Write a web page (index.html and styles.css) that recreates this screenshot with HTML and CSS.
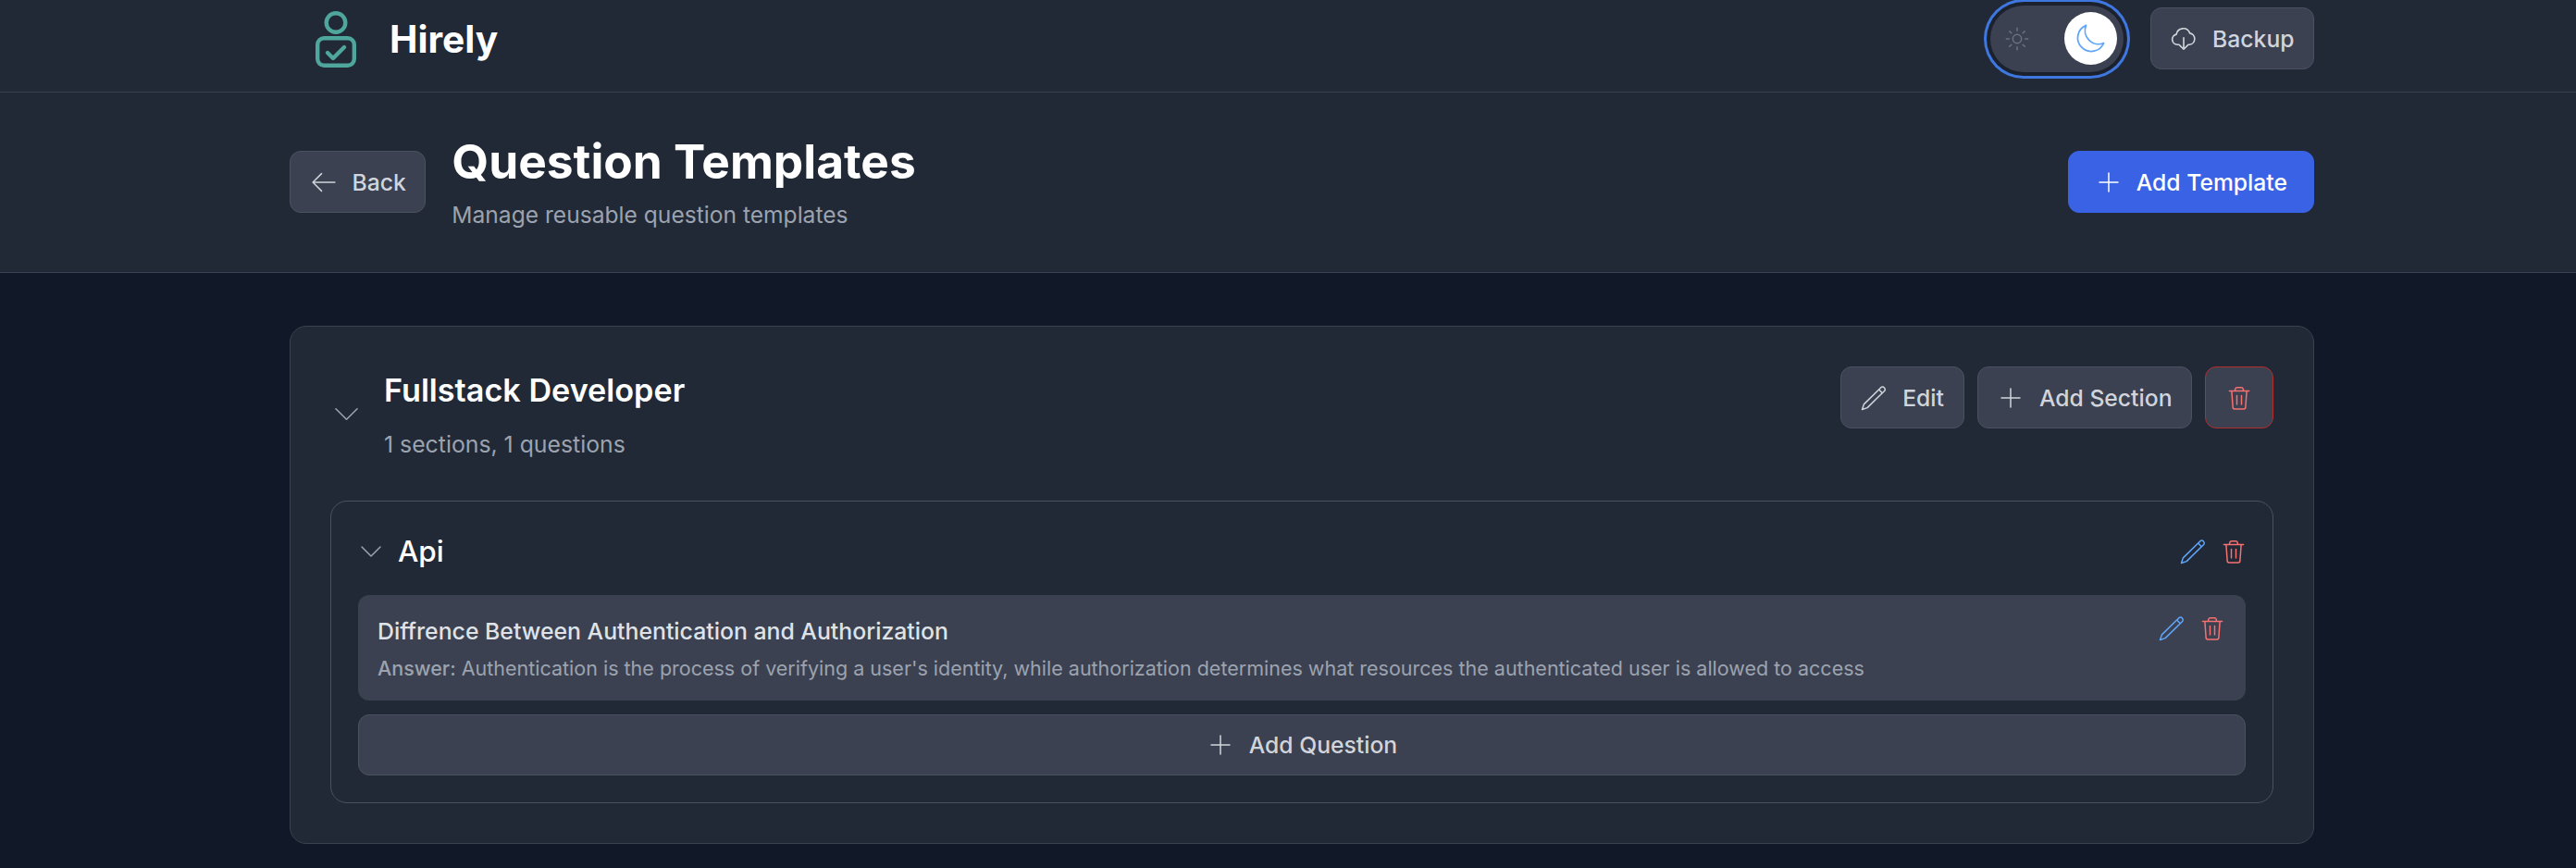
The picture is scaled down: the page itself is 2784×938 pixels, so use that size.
FILE: index.html
```html
<!DOCTYPE html>
<html lang="en">
<head>
<meta charset="utf-8">
<title>Hirely</title>
<link rel="stylesheet" href="styles.css">
</head>
<body>
<header class="topbar">
  <div class="wrap topbar-in">
    <div class="brand">
      <svg class="logo" viewBox="0 0 44 61" fill="none" stroke="#4fa69c" stroke-width="4.400" stroke-linecap="round" stroke-linejoin="round"><circle cx="22" cy="12.500" r="10.300"/><rect x="2.200" y="29.200" width="39.600" height="29.600" rx="7"/><path d="M13 45l6 6 12-12"/></svg>
      <span class="brand-name">Hirely</span>
    </div>
    <div class="top-actions">
      <div class="toggle">
        <svg class="sun" viewBox="0 0 24 24" fill="none" stroke="#6b7280" stroke-width="1.300" stroke-linecap="round"><circle cx="12" cy="12" r="4"/><path d="M12 2v2.500M12 19.500V22M2 12h2.500M19.500 12H22M4.900 4.900l1.800 1.800M17.300 17.300l1.800 1.800M4.900 19.100l1.800-1.800M17.300 6.700l1.800-1.800"/></svg>
        <span class="knob"><svg class="moon" viewBox="0 0 24 24" fill="none" stroke="#60a5fa" stroke-width="1.200" stroke-linejoin="round"><path d="M21.750 15a9.750 9.750 0 0 1-12.750-12.750A9.750 9.750 0 1 0 21.750 15z"/></svg></span>
      </div>
      <button class="btn"><svg class="ic" viewBox="0 0 24 24" fill="none" stroke="currentColor" stroke-width="1.300" stroke-linecap="round" stroke-linejoin="round"><path d="M8 17H6.500a4.500 4.500 0 0 1-.8-8.900 6 6 0 0 1 11.600-1A5 5 0 0 1 17 17h-1"/><path d="M12 11v10M8.500 17.500L12 21l3.500-3.500"/></svg>Backup</button>
    </div>
  </div>
</header>
<section class="subbar">
  <div class="wrap subbar-in">
    <div class="sub-left">
      <button class="btn"><svg class="ic" viewBox="0 0 24 24" fill="none" stroke="currentColor" stroke-width="1.200" stroke-linecap="round" stroke-linejoin="round"><path d="M10 4.500L2.500 12l7.500 7.500M2.500 12h19"/></svg>Back</button>
      <div class="sub-text">
        <h1 class="title">Question Templates</h1>
        <p class="subtitle">Manage reusable question templates</p>
      </div>
    </div>
    <button class="btn btn-primary"><svg class="ic" viewBox="0 0 24 24" fill="none" stroke="currentColor" stroke-width="1.200" stroke-linecap="round"><path d="M12 4v16M4 12h16"/></svg>Add Template</button>
  </div>
</section>
<main class="wrap content">
  <article class="card">
    <div class="card-head">
      <div class="card-left">
        <svg class="chev" viewBox="0 0 24 24" fill="none" stroke="#9ca3af" stroke-width="1" stroke-linecap="round" stroke-linejoin="round"><path d="M19.500 8.250L12 15.750 4.500 8.250"/></svg>
        <div>
          <h2 class="card-title">Fullstack Developer</h2>
          <p class="card-meta">1 sections, 1 questions</p>
        </div>
      </div>
      <div class="card-actions">
        <button class="btn"><svg class="ic" viewBox="0 0 24 24" fill="none" stroke="currentColor" stroke-width="1.200" stroke-linejoin="round"><path d="M18.500 2.800a2.200 2.200 0 0 1 3 3L6.500 20.500 2 22l1.500-4.500z"/><path d="M16.500 4.800l3 3"/></svg>Edit</button>
        <button class="btn"><svg class="ic" viewBox="0 0 24 24" fill="none" stroke="currentColor" stroke-width="1.200" stroke-linecap="round"><path d="M12 4v16M4 12h16"/></svg>Add Section</button>
        <button class="btn btn-danger"><svg class="ic" viewBox="0 0 24 24" fill="none" stroke="currentColor" stroke-width="1.200" stroke-linecap="round" stroke-linejoin="round"><path d="M3.500 6h17M8.500 6V4.500a2 2 0 0 1 2-1.500h3a2 2 0 0 1 2 1.500V6M5.500 6l1 14a1.500 1.500 0 0 0 1.500 1.500h8a1.500 1.500 0 0 0 1.500-1.500l1-14M10 10v7.500M14 10v7.500"/></svg></button>
      </div>
    </div>
    <section class="panel">
      <div class="panel-head">
        <div class="panel-left">
          <svg class="chev-sm" viewBox="0 0 24 24" fill="none" stroke="#9ca3af" stroke-width="1.100" stroke-linecap="round" stroke-linejoin="round"><path d="M19.500 8.250L12 15.750 4.500 8.250"/></svg>
          <h3 class="panel-title">Api</h3>
        </div>
        <div class="icon-row icon-row-out">
          <svg class="ic ic-blue" viewBox="0 0 24 24" fill="none" stroke="currentColor" stroke-width="1.200" stroke-linejoin="round"><path d="M18.500 2.800a2.200 2.200 0 0 1 3 3L6.500 20.500 2 22l1.500-4.500z"/><path d="M16.500 4.800l3 3"/></svg>
          <svg class="ic ic-red" viewBox="0 0 24 24" fill="none" stroke="currentColor" stroke-width="1.200" stroke-linecap="round" stroke-linejoin="round"><path d="M3.500 6h17M8.500 6V4.500a2 2 0 0 1 2-1.500h3a2 2 0 0 1 2 1.500V6M5.500 6l1 14a1.500 1.500 0 0 0 1.500 1.500h8a1.500 1.500 0 0 0 1.500-1.500l1-14M10 10v7.500M14 10v7.500"/></svg>
        </div>
      </div>
      <div class="question">
        <div class="q-text">
          <h4 class="q-title">Diffrence Between Authentication and Authorization</h4>
          <p class="q-answer"><strong>Answer:</strong> Authentication is the process of verifying a user's identity, while authorization determines what resources the authenticated user is allowed to access</p>
        </div>
        <div class="icon-row">
          <svg class="ic ic-blue" viewBox="0 0 24 24" fill="none" stroke="currentColor" stroke-width="1.200" stroke-linejoin="round"><path d="M18.500 2.800a2.200 2.200 0 0 1 3 3L6.500 20.500 2 22l1.500-4.500z"/><path d="M16.500 4.800l3 3"/></svg>
          <svg class="ic ic-red" viewBox="0 0 24 24" fill="none" stroke="currentColor" stroke-width="1.200" stroke-linecap="round" stroke-linejoin="round"><path d="M3.500 6h17M8.500 6V4.500a2 2 0 0 1 2-1.500h3a2 2 0 0 1 2 1.500V6M5.500 6l1 14a1.500 1.500 0 0 0 1.500 1.500h8a1.500 1.500 0 0 0 1.500-1.500l1-14M10 10v7.500M14 10v7.500"/></svg>
        </div>
      </div>
      <button class="btn btn-wide"><svg class="ic" viewBox="0 0 24 24" fill="none" stroke="currentColor" stroke-width="1.200" stroke-linecap="round"><path d="M12 4v16M4 12h16"/></svg>Add Question</button>
    </section>
  </article>
</main>
</body>
</html>
```
FILE: styles.css
```css
* { box-sizing: border-box; }
html, body { margin: 0; height: 100%; }
body {
  background: #111827;
  color: #fff;
  font-family: Inter, "Liberation Sans", sans-serif;
  overflow: hidden;
}
h1, h2, h3, h4, p { margin: 0; }
.wrap { width: 2188px; margin-left: 313px; }
.topbar { background: #212936; border-bottom: 1px solid #3b4151; height: 100px; }
.topbar-in { display: flex; justify-content: space-between; align-items: center; height: 83px; }
.brand { display: flex; align-items: center; gap: 36px; padding-left: 28px; padding-top: 2px; }
.logo { width: 44px; height: 61px; }
.brand-name { font-size: 40.700px; font-weight: 700; }
.top-actions { display: flex; align-items: center; gap: 22px; }
.toggle {
  width: 144px; height: 72px; border-radius: 36px; background: #3b4151;
  display: flex; align-items: center; justify-content: space-between; padding: 0 7px 0 15px;
  box-shadow: 0 0 0 4px #1b222e, 0 0 0 7px #3e77e0;
  margin-right: 7px;
}
.sun { width: 28px; height: 28px; }
.knob {
  width: 57px; height: 57px; border-radius: 50%; background: #fff;
  display: flex; align-items: center; justify-content: center;
}
.moon { width: 36px; height: 36px; }
.btn {
  display: inline-flex; align-items: center; justify-content: center; gap: 16px;
  height: 67px; padding: 0 20.500px;
  background: #3b4151; border: 1px solid #4b5161; border-radius: 12px;
  color: #d1d5db; font-family: inherit; font-size: 24.700px; font-weight: 500;
  white-space: nowrap;
}
.ic { width: 30px; height: 30px; flex: none; }
.subbar { background: #212936; border-bottom: 1px solid #3b4151; height: 195px; }
.subbar-in { display: flex; justify-content: space-between; align-items: center; height: 193px; }
.sub-left { display: flex; align-items: center; gap: 28px; }
.sub-text { padding-bottom: 2px; }
.title { font-size: 51.400px; font-weight: 700; line-height: 66px; }
.subtitle { font-size: 24.600px; color: #9ca3af; line-height: 36px; margin-top: 7px; }
.btn-primary { background: #3963e4; border-color: #3963e4; color: #fff; padding: 0 28px; gap: 15px; }
.content { padding-top: 57px; }
.card {
  background: #212936; border: 1px solid #3b4151; border-radius: 18px;
  height: 560px; padding: 43px 43px 0;
}
.card-head { display: flex; justify-content: space-between; align-items: flex-start; height: 145px; }
.card-left { display: flex; align-items: center; gap: 22px; padding-top: 5px; }
.chev { width: 37px; height: 37px; margin-bottom: 5px; margin-left: -1px; }
.card-title { font-size: 34.200px; font-weight: 600; line-height: 42px; }
.card-meta { font-size: 24.800px; color: #9ca3af; line-height: 36px; margin-top: 19px; }
.card-actions { display: flex; gap: 14px; }
.btn-danger { width: 74px; padding: 0; border-color: #b32d2d; color: #f87171; }
.panel {
  border: 1px solid #4b5161; border-radius: 18px;
  padding: 0 29px; height: 327px;
}
.panel-head { display: flex; justify-content: space-between; align-items: center; height: 101px; padding-top: 7px; }
.panel-left { display: flex; align-items: center; gap: 13px; margin-left: -2px; }
.chev-sm { width: 32px; height: 32px; }
.panel-title { font-size: 31.500px; font-weight: 500; line-height: 40px; }
.icon-row { display: flex; gap: 14px; align-items: center; }
.icon-row-out { margin-right: -2px; }
.ic-blue { color: #60a5fa; }
.ic-red { color: #f87171; }
.question {
  background: #3b4151; border-radius: 12px; height: 114px;
  padding: 21px 21px; display: flex; justify-content: space-between; align-items: flex-start;
}
.q-title { font-size: 24.800px; font-weight: 500; color: #dfe2e7; line-height: 36px; }
.q-answer { font-size: 21.500px; color: #9ca3af; line-height: 30px; margin-top: 7px; }
.q-answer strong { font-weight: 500; }
.btn-wide { width: 100%; margin-top: 15px; height: 66px; }
```
